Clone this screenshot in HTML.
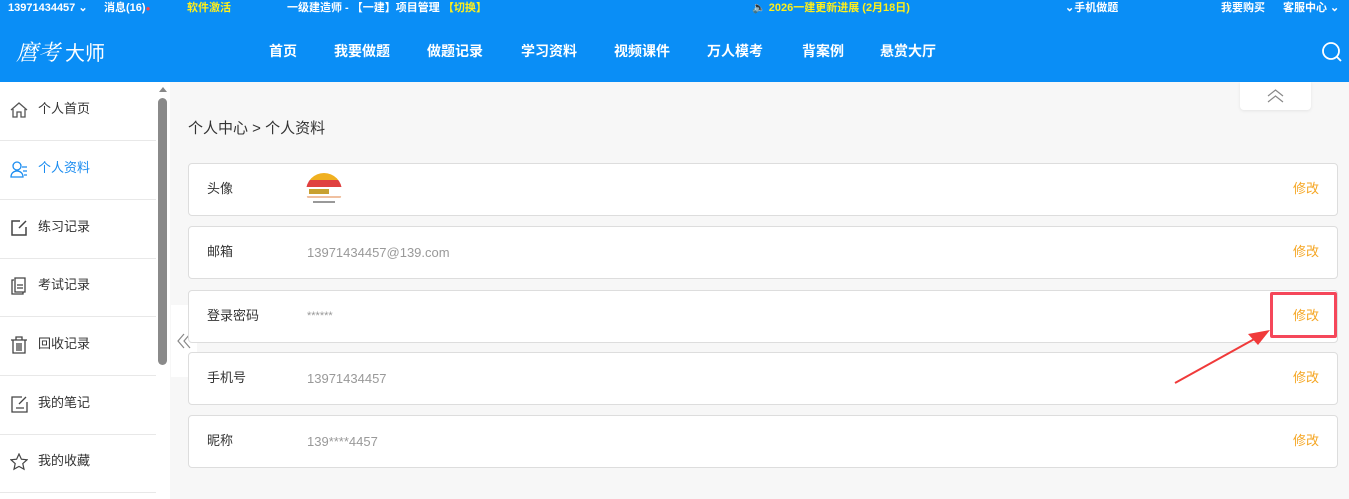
<!DOCTYPE html>
<html><head><meta charset="utf-8"><style>
*{margin:0;padding:0;box-sizing:border-box}
body{width:1349px;height:499px;overflow:hidden;background:#f7f7f7;font-family:"Liberation Sans","Noto Sans CJK SC",sans-serif;position:relative}
.top{position:absolute;left:0;top:0;width:1349px;height:82px;background:#0a8ef6;color:#fff}
.t{position:absolute;top:1px;font-size:11px;font-weight:bold;line-height:14px;white-space:nowrap}
.y{color:#ffef1a}
.nav{position:absolute;top:42px;font-size:14px;font-weight:bold;line-height:18px}
.side{position:absolute;left:0;top:82px;width:156px;height:417px;background:#fff}
.si{position:absolute;left:0;width:156px;height:59px;border-bottom:1px solid #e8e8e8;font-size:13px;color:#333}
.si span{position:absolute;left:38px;top:17px;line-height:20px}
.si svg{position:absolute;left:10px;top:19px}
.card{position:absolute;left:188px;width:1150px;height:53px;background:#fff;border:1px solid #ddd;border-radius:4px;font-size:13px}
.card span{line-height:18px}
.card .l{position:absolute;left:18px;top:16px;color:#333}
.card .v{position:absolute;left:118px;top:17px;color:#999}
.card .e{position:absolute;right:18px;top:16px;color:#f5a623}
</style></head><body>
<div class="top">
<div class="t" style="left:8px">13971434457 ⌄</div>
<div class="t" style="left:104px">消息(16)<span style="color:#f44;font-size:8px">●</span></div>
<div class="t y" style="left:187px">软件激活</div>
<div class="t" style="left:287px">一级建造师 - 【一建】项目管理 <span class="y">【切换】</span></div>
<div class="t y" style="left:752px">🔈 2026一建更新进展 (2月18日)</div>
<div class="t" style="left:1065px">⌄手机做题</div>
<div class="t" style="left:1221px">我要购买</div>
<div class="t" style="left:1283px">客服中心 ⌄</div>
<div style="position:absolute;left:16px;top:37px;font-size:22px;font-style:italic;font-family:'Noto Serif CJK SC',serif;line-height:30px;white-space:nowrap">麿考<span style="font-style:normal;font-family:'Noto Sans CJK SC';font-size:20px;margin-left:5px">大师</span></div>
<div class="nav" style="left:269px">首页</div>
<div class="nav" style="left:334px">我要做题</div>
<div class="nav" style="left:427px">做题记录</div>
<div class="nav" style="left:521px">学习资料</div>
<div class="nav" style="left:614px">视频课件</div>
<div class="nav" style="left:707px">万人模考</div>
<div class="nav" style="left:802px">背案例</div>
<div class="nav" style="left:880px">悬赏大厅</div>
<svg style="position:absolute;left:1321px;top:41px" width="22" height="22" viewBox="0 0 22 22"><circle cx="10" cy="10" r="8" fill="none" stroke="#fff" stroke-width="1.8"/><path d="M16 16l4 4" stroke="#fff" stroke-width="1.8"/></svg>
</div>
<div class="side">
<div class="si" style="top:0"><svg width="18" height="18" viewBox="0 0 18 18" fill="none" stroke="#555" stroke-width="1.3"><path d="M1 9L9 2l8 7M3 8v8h4v-5h4v5h4V8"/></svg><span>个人首页</span></div>
<div class="si" style="top:59px;color:#1a8cf0"><svg width="18" height="18" viewBox="0 0 18 18" fill="none" stroke="#1a8cf0" stroke-width="1.3"><circle cx="7" cy="6" r="4"/><path d="M1 17c0-4 3-6 6-6s6 2 6 6zM12 7h5M13 11h4M14 15h3"/></svg><span>个人资料</span></div>
<div class="si" style="top:118px"><svg width="18" height="18" viewBox="0 0 18 18" fill="none" stroke="#444" stroke-width="1.5"><path d="M10 2H2v14h14V8M9 9l7-7"/></svg><span>练习记录</span></div>
<div class="si" style="top:176px"><svg width="18" height="18" viewBox="0 0 18 18" fill="none" stroke="#444" stroke-width="1.3"><path d="M4 3H2v14h11v-2M5 1h10v14H5zM7 8h6M7 11h6"/></svg><span>考试记录</span></div>
<div class="si" style="top:235px"><svg width="18" height="18" viewBox="0 0 18 18" fill="none" stroke="#444" stroke-width="1.3"><path d="M1 4h16M6 4V1h6v3M3 4v13h12V4M7 7v8M9 7v8M11 7v8"/></svg><span>回收记录</span></div>
<div class="si" style="top:294px"><svg width="18" height="18" viewBox="0 0 18 18" fill="none" stroke="#444" stroke-width="1.3"><path d="M12 2H2v15h15V7M6 13h8M9 9l7-7"/></svg><span>我的笔记</span></div>
<div class="si" style="top:352px"><svg width="18" height="18" viewBox="0 0 18 18" fill="none" stroke="#444" stroke-width="1.2"><path d="M9 1l2.4 5.2 5.6.6-4.2 3.8 1.2 5.6L9 13.4 4 16.2l1.2-5.6L1 6.8l5.6-.6z"/></svg><span>我的收藏</span></div>
</div>
<div style="position:absolute;left:156px;top:82px;width:14px;height:417px;background:#fff"></div>
<div style="position:absolute;left:159px;top:87px;width:0;height:0;border:4px solid transparent;border-bottom:5px solid #888;border-top:0"></div>
<div style="position:absolute;left:158px;top:98px;width:9px;height:267px;background:#8a8a8a;border-radius:5px"></div>
<div style="position:absolute;left:171px;top:305px;width:26px;height:72px;background:#fff;border-radius:0 4px 4px 0"><svg style="position:absolute;left:6px;top:28px" width="14" height="16" viewBox="0 0 14 16" fill="none" stroke="#888" stroke-width="1.2"><path d="M7 1L1 8l6 7M13 1L7 8l6 7"/></svg></div>
<div style="position:absolute;left:1240px;top:82px;width:71px;height:28px;background:#fff;border-radius:0 0 4px 4px;box-shadow:0 1px 3px rgba(0,0,0,.08)"><svg style="position:absolute;left:27px;top:7px" width="17" height="14" viewBox="0 0 17 14" fill="none" stroke="#888" stroke-width="1.2"><path d="M1 7l7.5-6 7.5 6M1 13l7.5-6 7.5 6"/></svg></div>
<div style="position:absolute;left:188px;top:119px;font-size:15px;color:#333;line-height:20px">个人中心 &gt; 个人资料</div>
<div class="card" style="top:163px"><span class="l">头像</span><div style="position:absolute;left:117px;top:9px;width:36px;height:36px;border-radius:50%;overflow:hidden;background:#fff"><div style="height:7px;background:#f0b020"></div><div style="height:7px;background:#e04040"></div><div style="height:5px;margin:2px 3px;background:#c8a030;width:20px"></div><div style="height:2px;background:#f0c0a0;margin:2px 0"></div><div style="height:2px;background:#999;margin:3px 7px"></div></div><span class="e">修改</span></div>
<div class="card" style="top:226px"><span class="l">邮箱</span><span class="v">13971434457@139.com</span><span class="e">修改</span></div>
<div class="card" style="top:290px"><span class="l">登录密码</span><span class="v" style="top:16px;font-size:11px">******</span><span class="e">修改</span></div>
<div class="card" style="top:352px"><span class="l">手机号</span><span class="v">13971434457</span><span class="e">修改</span></div>
<div class="card" style="top:415px"><span class="l">昵称</span><span class="v">139****4457</span><span class="e">修改</span></div>
<div style="position:absolute;left:1270px;top:292px;width:67px;height:46px;border:3px solid #f5475a;border-radius:2px"></div>
<svg style="position:absolute;left:1170px;top:320px" width="110" height="70" viewBox="0 0 110 70"><path d="M5 63L88 17" stroke="#f03a3a" stroke-width="2"/><path d="M100 10L78 14L88 25z" fill="#f03a3a"/></svg>
</body></html>
